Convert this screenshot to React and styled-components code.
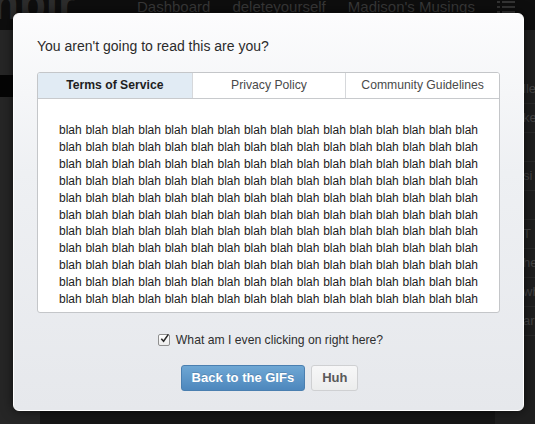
import styled, { createGlobalStyle } from 'styled-components';

const GlobalStyle = createGlobalStyle`
  html, body {
    margin: 0;
    padding: 0;
    background: #1b1b1b;
    font-family: "Liberation Sans", Arial, Helvetica, sans-serif;
  }
`;

const BLAH = Array(16 * 11).fill('blah').join(' ');

export default function App() {
  return (
    <>
      <GlobalStyle />
      <Page>
        <TopBar>
          <Logo>nblr</Logo>
          <NavLink>Dashboard</NavLink>
          <NavLink>deleteyourself</NavLink>
          <NavLink>Madison's Musings</NavLink>
          <ListIcon viewBox="0 0 18 14">
            <rect x="0" y="1" width="3" height="2" />
            <rect x="5" y="1" width="13" height="2" />
            <rect x="0" y="6" width="3" height="2" />
            <rect x="5" y="6" width="13" height="2" />
            <rect x="0" y="11" width="3" height="2" />
            <rect x="5" y="11" width="13" height="2" />
          </ListIcon>
        </TopBar>
        <Body>
          <LeftRail>
            <Blob />
          </LeftRail>
          <Feed />
          <Sidebar>
            {['lle', 'ke', '', 'si', '', 'T', 'he', 'wh', 'ar'].map((t, i) => (
              <SideRow key={i}>{t}</SideRow>
            ))}
          </Sidebar>
        </Body>

        <Modal>
          <Question>You aren't going to read this are you?</Question>
          <Panel>
            <Tabs>
              <Tab $active>Terms of Service</Tab>
              <Tab>Privacy Policy</Tab>
              <Tab>Community Guidelines</Tab>
            </Tabs>
            <Legal>{BLAH}</Legal>
          </Panel>
          <Agree>
            <Check>
              <svg viewBox="0 0 12 12" width="11" height="11">
                <path d="M2.5 6.2 L5 9 L10.2 1.5" fill="none" stroke="#2a2a2a" strokeWidth="1.7" />
              </svg>
            </Check>
            <span>What am I even clicking on right here?</span>
          </Agree>
          <Actions>
            <Button $primary>Back to the GIFs</Button>
            <Button>Huh</Button>
          </Actions>
        </Modal>
      </Page>
    </>
  );
}

const Page = styled.div`
  position: relative;
  width: 535px;
  height: 424px;
  overflow: hidden;
  background: #1b1b1b;
`;

const TopBar = styled.div`
  display: flex;
  align-items: flex-start;
  height: 30px;
  background: #0e0e0e;
`;

const Logo = styled.div`
  font-size: 44px;
  font-weight: bold;
  line-height: 1;
  margin: -18px 0 0 -8px;
  color: #2c2c2c;
  width: 145px;
`;

const NavLink = styled.div`
  font-size: 15px;
  margin-top: -2px;
  margin-right: 22px;
  color: #383838;
`;

const ListIcon = styled.svg`
  width: 18px;
  height: 14px;
  fill: #333;
`;

const Body = styled.div`
  display: flex;
  height: 394px;
`;

const LeftRail = styled.div`
  width: 40px;
  background: #262626;
`;

const Blob = styled.div`
  margin-top: 45px;
  height: 22px;
  width: 30px;
  background: #050505;
  border-radius: 0 12px 12px 0;
`;

const Feed = styled.div`
  flex: 1;
  background: #161616;
`;

const Sidebar = styled.div`
  width: 40px;
  background: #1f1f1f;
  display: flex;
  flex-direction: column;
  padding-top: 45px;
`;

const SideRow = styled.div`
  height: 28px;
  border-bottom: 1px solid #2a2a2a;
  color: #444;
  font-size: 13px;
  padding-left: 28px;
  line-height: 28px;
  white-space: nowrap;
`;

const Modal = styled.div`
  position: absolute;
  top: 13px;
  left: 13px;
  width: 511px;
  height: 398px;
  box-sizing: border-box;
  padding: 24px 23px 0;
  border-radius: 6px;
  border: 1px solid #ffffff;
  background: linear-gradient(180deg, #fcfcfd 0%, #eef0f3 40%, #e6e8ec 100%);
  box-shadow: 0 0 12px rgba(0, 0, 0, 0.6);
  display: flex;
  flex-direction: column;
`;

const Question = styled.div`
  font-size: 14px;
  line-height: 16px;
  color: #2b2b2b;
  margin-bottom: 18px;
`;

const Panel = styled.div`
  border: 1px solid #c4c6c9;
  border-radius: 3px;
  background: #fff;
  overflow: hidden;
`;

const Tabs = styled.div`
  display: grid;
  grid-template-columns: 1fr 1fr 1fr;
  border-bottom: 1px solid #c8cacd;
`;

const Tab = styled.div`
  height: 25px;
  line-height: 25px;
  text-align: center;
  font-size: 12.2px;
  font-weight: ${(p) => (p.$active ? 'bold' : 'normal')};
  color: ${(p) => (p.$active ? '#1e1e1e' : '#4a4a4a')};
  background: ${(p) => (p.$active ? '#e1ebf4' : '#fff')};
  & + & {
    border-left: 1px solid #d6d8db;
  }
`;

const Legal = styled.div`
  height: 213px;
  overflow: hidden;
  box-sizing: border-box;
  padding: 23px 20px 0;
  font-size: 12px;
  line-height: 16.9px;
  word-spacing: 0.4px;
  color: #1c1c1c;
  text-align: center;
`;

const Agree = styled.div`
  display: flex;
  align-items: center;
  justify-content: center;
  gap: 6px;
  margin-top: 19px;
  padding-left: 4px;
  font-size: 12.2px;
  line-height: 16px;
  color: #2e2e2e;
`;

const Check = styled.span`
  display: flex;
  align-items: center;
  justify-content: center;
  width: 10px;
  height: 10px;
  border: 1px solid #8f8f8f;
  border-radius: 2px;
  background: linear-gradient(#ffffff, #ececec);
  & svg {
    margin: -3px -2px 0 0;
  }
`;

const Actions = styled.div`
  display: flex;
  justify-content: center;
  gap: 6px;
  margin-top: 17px;
  padding-left: 2px;
`;

const Button = styled.div`
  height: 26px;
  box-sizing: border-box;
  line-height: 24px;
  padding: 0 10px;
  font-size: 13px;
  font-weight: bold;
  border-radius: 3px;
  color: ${(p) => (p.$primary ? '#ffffff' : '#5a5a5a')};
  border: 1px solid ${(p) => (p.$primary ? '#4a7fb0' : '#cfd0d2')};
  background: ${(p) =>
    p.$primary
      ? 'linear-gradient(180deg, #6ea7d4 0%, #4d87bd 100%)'
      : 'linear-gradient(180deg, #f7f7f8 0%, #eceded 100%)'};
  text-shadow: ${(p) => (p.$primary ? '0 -1px 0 rgba(0,0,0,0.15)' : 'none')};
`;
